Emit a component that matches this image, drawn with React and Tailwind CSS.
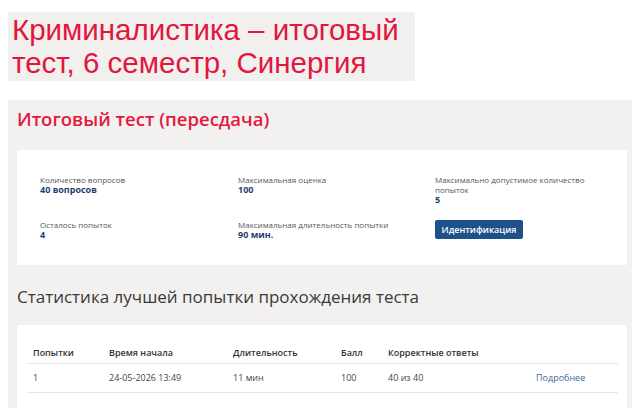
import React from "react";

const infoRows = [
  [
    { label: "Количество вопросов", value: "40 вопросов" },
    { label: "Максимальная оценка", value: "100" },
    { label: "Максимально допустимое количество попыток", value: "5", wide: true },
  ],
  [
    { label: "Осталось попыток", value: "4" },
    { label: "Максимальная длительность попытки", value: "90 мин." },
  ],
];

const columns = ["Попытки", "Время начала", "Длительность", "Балл", "Корректные ответы", ""];
const attempt = ["1", "24-05-2026 13:49", "11 мин", "100", "40 из 40"];

const InfoItem = ({ label, value, wide }) => (
  <div className={wide ? "w-[150px]" : ""}>
    <p className="text-[8px] leading-[10px] text-[#555]">{label}</p>
    <p className="text-[9px] leading-[10px] font-bold text-[#1d3f6c]">{value}</p>
  </div>
);

const App = () => {
  return (
    <div className="w-[632px] h-[408px] overflow-hidden bg-white font-['Open_Sans',sans-serif]">
      {/* заголовок-плашка */}
      <div className="pl-2 pt-3">
        <div className="w-[407px] h-[69px] bg-[#f2f0ee] pl-1 pt-[1px] font-['Liberation_Sans',Arial,sans-serif] text-[29.5px] leading-[33px] text-[#e2163f] whitespace-nowrap">
          Криминалистика – итоговый
          <br />
          тест, 6 семестр, Синергия
        </div>
      </div>

      <div className="ml-2 mt-[19px] bg-[#f2f1ef] pl-[9px] pr-[5px] pt-[6px] pb-10">
        <h1 className="text-[18.5px] leading-[26px] font-semibold text-[#e2193f]">
          Итоговый тест (пересдача)
        </h1>

        <div className="mt-[18px] bg-white rounded-[2px] pl-[23px] pt-[25px] pb-[25px]">
          <div className="grid grid-cols-[198px_197px_1fr] h-[45px]">
            {infoRows[0].map((item) => (
              <InfoItem key={item.label} {...item} />
            ))}
          </div>
          <div className="grid grid-cols-[198px_197px_1fr]">
            {infoRows[1].map((item) => (
              <InfoItem key={item.label} {...item} />
            ))}
            <div className="flex">
              <button className="w-[88px] h-[19px] rounded-[2px] bg-[#1d5188] text-white text-[9px] leading-[19px] font-semibold">
                Идентификация
              </button>
            </div>
          </div>
        </div>

        <h2 className="mt-5 text-[17px] leading-[24px] text-[#3a3a3a]">
          Статистика лучшей попытки прохождения теста
        </h2>

        <div className="mt-4 bg-white rounded-[2px] pl-[10px] pr-[9px] pt-[17px] pb-6">
          <div className="grid grid-cols-[76px_124px_108px_47px_148px_1fr] h-[22px] items-center border-b border-[#e6e6e6] text-[9px] font-semibold text-[#333]">
            {columns.map((c, i) => (
              <div key={i} className="px-[6px] whitespace-nowrap">
                {c}
              </div>
            ))}
          </div>
          <div className="grid grid-cols-[76px_124px_108px_47px_148px_1fr] h-[29px] items-center border-b border-[#e6e6e6] text-[9px] text-[#444]">
            {attempt.map((c, i) => (
              <div key={i} className="px-[6px] whitespace-nowrap">
                {c}
              </div>
            ))}
            <div className="px-[6px] text-[#3d6b9b]">Подробнее</div>
          </div>
        </div>
      </div>
    </div>
  );
};

export default App;
